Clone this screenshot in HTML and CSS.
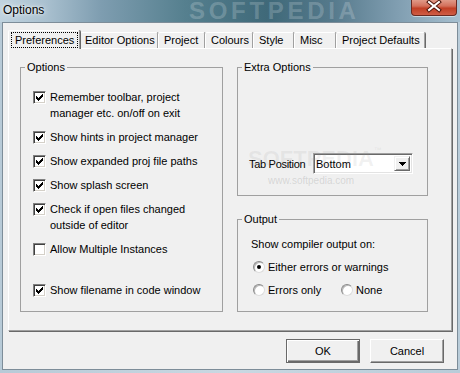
FILE: index.html
```
<!DOCTYPE html>
<html>
  <head>
    <meta charset="utf-8" />
    <title>Options</title>
    <meta name="viewport" content="width=device-width, initial-scale=1" />
    <link rel="stylesheet" href="styles.css">
  </head>
  <body>
    <div class="window">
      <div class="titlebar">
        <div class="title">Options</div>
        <div class="watermark-title">SOFTPEDIA</div>
        <div class="close-button">
          <svg width="44" height="15" viewBox="0 0 44 15">
            <path d="M17 2 L27 10 M27 2 L17 10" stroke="#4a1208" stroke-width="4" stroke-linecap="square" fill="none"/>
            <path d="M17 2 L27 10 M27 2 L17 10" stroke="#fff" stroke-width="2" stroke-linecap="square" fill="none"/>
          </svg>
        </div>
      </div>

      <div class="client">
        <div class="tabs">
          <div class="tab tab-active tab-preferences"><span class="focus-rect">Preferences</span></div>
          <div class="tab tab-editor">Editor Options</div>
          <div class="tab tab-project">Project</div>
          <div class="tab tab-colours">Colours</div>
          <div class="tab tab-style">Style</div>
          <div class="tab tab-misc">Misc</div>
          <div class="tab tab-defaults">Project Defaults</div>
        </div>

        <div class="tab-page">
          <fieldset class="group group-options">
            <legend>Options</legend>
            <div class="check-list">
              <div class="check-row">
                <span class="checkbox"><svg width="11" height="11" viewBox="0 0 11 11"><path d="M2 4H3V5H4V6H5V5H6V4H7V3H8V2H9V5H8V6H7V7H6V8H5V9H4V8H3V7H2Z"/></svg></span>
                <span>Remember toolbar, project<br>manager etc. on/off on exit</span>
              </div>
              <div class="check-row">
                <span class="checkbox"><svg width="11" height="11" viewBox="0 0 11 11"><path d="M2 4H3V5H4V6H5V5H6V4H7V3H8V2H9V5H8V6H7V7H6V8H5V9H4V8H3V7H2Z"/></svg></span>
                <span>Show hints in project manager</span>
              </div>
              <div class="check-row">
                <span class="checkbox"><svg width="11" height="11" viewBox="0 0 11 11"><path d="M2 4H3V5H4V6H5V5H6V4H7V3H8V2H9V5H8V6H7V7H6V8H5V9H4V8H3V7H2Z"/></svg></span>
                <span>Show expanded proj file paths</span>
              </div>
              <div class="check-row">
                <span class="checkbox"><svg width="11" height="11" viewBox="0 0 11 11"><path d="M2 4H3V5H4V6H5V5H6V4H7V3H8V2H9V5H8V6H7V7H6V8H5V9H4V8H3V7H2Z"/></svg></span>
                <span>Show splash screen</span>
              </div>
              <div class="check-row">
                <span class="checkbox"><svg width="11" height="11" viewBox="0 0 11 11"><path d="M2 4H3V5H4V6H5V5H6V4H7V3H8V2H9V5H8V6H7V7H6V8H5V9H4V8H3V7H2Z"/></svg></span>
                <span>Check if open files changed<br>outside of editor</span>
              </div>
              <div class="check-row">
                <span class="checkbox"></span>
                <span>Allow Multiple Instances</span>
              </div>
              <div class="check-row check-row-spaced">
                <span class="checkbox"><svg width="11" height="11" viewBox="0 0 11 11"><path d="M2 4H3V5H4V6H5V5H6V4H7V3H8V2H9V5H8V6H7V7H6V8H5V9H4V8H3V7H2Z"/></svg></span>
                <span>Show filename in code window</span>
              </div>
            </div>
          </fieldset>

          <div class="right-column">
            <fieldset class="group group-extra">
              <legend>Extra Options</legend>
              <div class="tab-position">
                <span class="tab-position-label">Tab Position</span>
                <div class="combo">
                  <span class="combo-text">Bottom</span>
                  <span class="combo-button"><svg width="7" height="4" viewBox="0 0 7 4"><path d="M0 0H7V1H6V2H5V3H4V4H3V3H2V2H1V1H0Z"/></svg></span>
                </div>
              </div>
            </fieldset>

            <fieldset class="group group-output">
              <legend>Output</legend>
              <div class="output-body">
                <div>Show compiler output on:</div>
                <div class="radio-row">
                  <span class="radio-option"><span class="radio radio-checked"></span>Either errors or warnings</span>
                </div>
                <div class="radio-row">
                  <span class="radio-option radio-option-wide"><span class="radio"></span>Errors only</span>
                  <span class="radio-option"><span class="radio"></span>None</span>
                </div>
              </div>
            </fieldset>
          </div>

          <div class="watermark-big">SOFTPEDIA<span class="tm">™</span></div>
          <div class="watermark-url">www.softpedia.com</div>
        </div>

        <div class="dialog-buttons">
          <button class="button button-default">OK</button>
          <button class="button">Cancel</button>
        </div>
      </div>
    </div>
  </body>
</html>
```

FILE: styles.css
```
body {
  margin: 0;
  font-family: "Liberation Sans", Arial, sans-serif;
  font-size: 11px;
  color: #000;
}

.window {
  width: 460px;
  height: 373px;
  box-sizing: border-box;
  padding-bottom: 3px;
  display: flex;
  flex-direction: column;
  background: linear-gradient(90deg, #b7cad7 0%, #c9d8e2 50%, #b9ccd9 100%);
  overflow: hidden;
}

.titlebar {
  position: relative;
  height: 22px;
  display: flex;
  align-items: flex-start;
  padding: 0 3px;
  background: linear-gradient(90deg, #c0d3df 0%, #a9c0cf 10%, #7e9db0 22%, #56808f 40%, #3f6979 58%, #55798b 72%, #7f9db0 86%, #a6bfcf 100%);
}

.title {
  line-height: 20px;
  font-size: 12px;
  text-shadow: 0 0 6px rgba(255, 255, 255, 0.9), 0 0 3px rgba(255, 255, 255, 0.8);
}

.watermark-title {
  position: absolute;
  left: 189px;
  top: 1px;
  line-height: 20px;
  font-size: 24px;
  font-weight: bold;
  letter-spacing: 3.7px;
  color: rgba(255, 255, 255, 0.2);
}

.close-button {
  margin-left: auto;
  width: 46px;
  height: 16px;
  box-sizing: border-box;
  border: 1px solid #6a2a22;
  border-top: none;
  border-radius: 0 0 4px 4px;
  background: linear-gradient(#e09a88 0%, #d3705b 40%, #c13f25 55%, #cf5d45 100%);
  box-shadow: 0 1px 0 rgba(255, 255, 255, 0.5);
}

.close-button svg {
  display: block;
}

.client {
  flex: 1;
  margin: 0 2px;
  border: 1px solid #7d8d99;
  background: #f0f0f0;
  display: flex;
  flex-direction: column;
}

/* tab strip */
.tabs {
  display: flex;
  align-items: flex-end;
  height: 18px;
  margin: 7px 0 0 5px;
}

.tab {
  box-sizing: border-box;
  height: 16px;
  padding-left: 5px;
  border: 1px solid;
  border-color: #fff #a0a0a0 transparent #fff;
  border-bottom: none;
  border-radius: 2px 2px 0 0;
  box-shadow: 1px 0 0 #696969;
  line-height: 15px;
  white-space: nowrap;
}

.tab-active {
  position: relative;
  z-index: 1;
  height: 19px;
  margin-bottom: -1px;
  padding: 1px 0 0 2px;
  background: #f0f0f0;
}

.focus-rect {
  display: block;
  box-sizing: border-box;
  width: 67px;
  height: 16px;
  padding-left: 3px;
  border: 1px dotted #000;
  line-height: 14px;
}

.tab-preferences { width: 72px; }
.tab-editor { width: 78px; padding-left: 4px; }
.tab-project { width: 47px; }
.tab-colours { width: 48px; }
.tab-style { width: 41px; }
.tab-misc { width: 42px; }
.tab-defaults { width: 89px; }

/* page */
.tab-page {
  position: relative;
  box-sizing: border-box;
  width: 444px;
  height: 283px;
  margin-left: 5px;
  padding: 12px 0 0 11px;
  border: 1px solid;
  border-color: #fff #a0a0a0 #a0a0a0 #fff;
  box-shadow: 1px 1px 0 #696969;
  display: grid;
  grid-template-columns: 203px 191px;
  column-gap: 14px;
  align-items: start;
}

.group {
  margin: 0;
  padding: 0;
  min-width: 0;
  box-sizing: border-box;
  border: 1px solid #a0a0a0;
}

.group legend {
  margin-left: 4px;
  padding: 0 2px;
  line-height: 13px;
}

.group-options {
  height: 251px;
}

.check-list {
  display: flex;
  flex-direction: column;
  gap: 8px;
  padding: 15px 0 0 12px;
}

.check-row {
  display: flex;
  align-items: flex-start;
  gap: 4px;
  line-height: 16px;
}

.check-row-spaced {
  margin-top: 17px;
}

.checkbox {
  flex: none;
  box-sizing: border-box;
  width: 13px;
  height: 13px;
  margin-top: 2px;
  background: #fff;
  border: 1px solid;
  border-color: #808080 #fff #fff #808080;
  box-shadow: inset 1px 1px 0 #404040, inset -1px -1px 0 #d4d0c8;
}

.checkbox svg {
  display: block;
}

.right-column {
  display: flex;
  flex-direction: column;
  gap: 17px;
}

.group-extra {
  height: 135px;
}

.tab-position {
  display: flex;
  align-items: center;
  padding: 79px 0 0 11px;
}

.tab-position-label {
  width: 64px;
  letter-spacing: -0.3px;
}

.combo {
  box-sizing: border-box;
  width: 100px;
  height: 21px;
  padding: 2px;
  display: flex;
  align-items: center;
  background: #fff;
  border: 1px solid;
  border-color: #a0a0a0 #fff #fff #a0a0a0;
  box-shadow: inset 1px 1px 0 #696969, inset -1px -1px 0 #e3e3e3;
}

.combo-text {
  flex: 1;
}

.combo-button {
  box-sizing: border-box;
  width: 16px;
  height: 15px;
  display: flex;
  align-items: center;
  justify-content: center;
  background: #f0f0f0;
  border: 1px solid;
  border-color: #f0f0f0 #696969 #696969 #f0f0f0;
  box-shadow: inset 1px 1px 0 #fff, inset -1px -1px 0 #a0a0a0;
}

.combo-button svg {
  display: block;
}

.group-output {
  height: 99px;
}

.output-body {
  display: flex;
  flex-direction: column;
  gap: 7px;
  padding: 10px 0 0 13px;
  line-height: 16px;
}

.radio-row {
  display: flex;
  align-items: center;
  padding-left: 2px;
}

.radio-option {
  display: flex;
  align-items: center;
  gap: 3px;
}

.radio-option-wide {
  width: 88px;
}

.radio {
  position: relative;
  flex: none;
  box-sizing: border-box;
  width: 12px;
  height: 12px;
  border-radius: 50%;
  background: #fff;
  border: 1px solid;
  border-color: #8a8a8a #dcdcdc #dcdcdc #8a8a8a;
  box-shadow: inset 1px 1px 0 #b8b8b8;
}

.radio-checked::after {
  content: "";
  position: absolute;
  left: 3px;
  top: 3px;
  width: 4px;
  height: 4px;
  border-radius: 50%;
  background: #000;
}

.watermark-big {
  position: absolute;
  left: 239px;
  top: 97px;
  font-size: 22px;
  font-weight: bold;
  color: rgba(150, 150, 150, 0.13);
  pointer-events: none;
}

.watermark-big .tm {
  font-size: 8px;
  vertical-align: top;
}

.watermark-url {
  position: absolute;
  left: 259px;
  top: 126px;
  font-size: 10px;
  color: rgba(150, 150, 150, 0.3);
  pointer-events: none;
}

/* bottom buttons */
.dialog-buttons {
  display: flex;
  justify-content: flex-end;
  gap: 10px;
  margin: 8px 13px 0 0;
}

.button {
  box-sizing: border-box;
  width: 74px;
  height: 24px;
  padding: 0;
  font-family: inherit;
  font-size: 11px;
  color: #000;
  background: #f0f0f0;
  border: 1px solid;
  border-color: #fff #696969 #696969 #fff;
  box-shadow: inset -1px -1px 0 #a0a0a0;
}

.button-default {
  border-color: #696969;
  box-shadow: inset 1px 1px 0 #fff, inset -1px -1px 0 #696969, inset -2px -2px 0 #a0a0a0;
}
```
